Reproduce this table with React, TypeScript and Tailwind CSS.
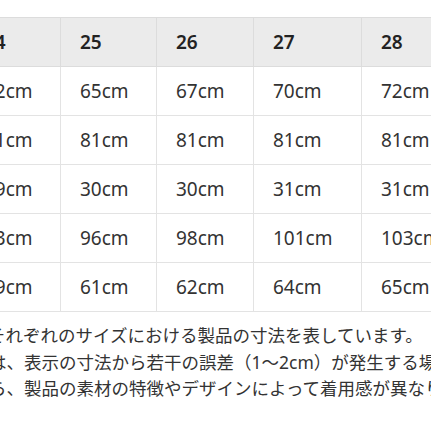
import React from "react";

const header = ["24", "25", "26", "27", "28"];
const rows = [
  ["62cm", "65cm", "67cm", "70cm", "72cm"],
  ["81cm", "81cm", "81cm", "81cm", "81cm"],
  ["29cm", "30cm", "30cm", "31cm", "31cm"],
  ["93cm", "96cm", "98cm", "101cm", "103cm"],
  ["59cm", "61cm", "62cm", "64cm", "65cm"],
];

export default function App() {
  return (
    <div
      className="w-[431px] h-[431px] overflow-hidden bg-white text-[#333]"
      style={{ fontFamily: '"Noto Sans", "Noto Sans CJK JP", sans-serif' }}
    >
      <div className="pt-[17px] ml-[-36px]">
        <table className="table-fixed border-collapse w-[560px]">
          <colgroup>
            <col className="w-[96px]" />
            <col className="w-[96px]" />
            <col className="w-[97px]" />
            <col className="w-[108px]" />
            <col className="w-[163px]" />
          </colgroup>
          <thead>
            <tr className="h-[49px] bg-[#ebebeb]">
              {header.map((h, i) => (
                <th
                  key={i}
                  className="border border-[#dcdcdc] pl-[19px] text-left align-middle text-[19px] font-semibold text-[#222]"
                >
                  {h}
                </th>
              ))}
            </tr>
          </thead>
          <tbody>
            {rows.map((r, ri) => (
              <tr key={ri} className="h-[49px]">
                {r.map((c, ci) => (
                  <td
                    key={ci}
                    className="border border-[#e3e3e3] pl-[19px] text-left align-middle text-[19px] text-[#333]"
                  >
                    {c}
                  </td>
                ))}
              </tr>
            ))}
          </tbody>
        </table>
      </div>
      <div className="mt-[10px] text-[17.5px] leading-[26.5px] text-[#333] whitespace-nowrap">
        <div className="ml-[-12px]">それぞれのサイズにおける製品の寸法を表しています。</div>
        <div className="ml-[-11px]">は、表示の寸法から若干の誤差（1～2cm）が発生する場合があります。</div>
        <div className="ml-[-11px]">ら、製品の素材の特徴やデザインによって着用感が異なります。</div>
      </div>
    </div>
  );
}
